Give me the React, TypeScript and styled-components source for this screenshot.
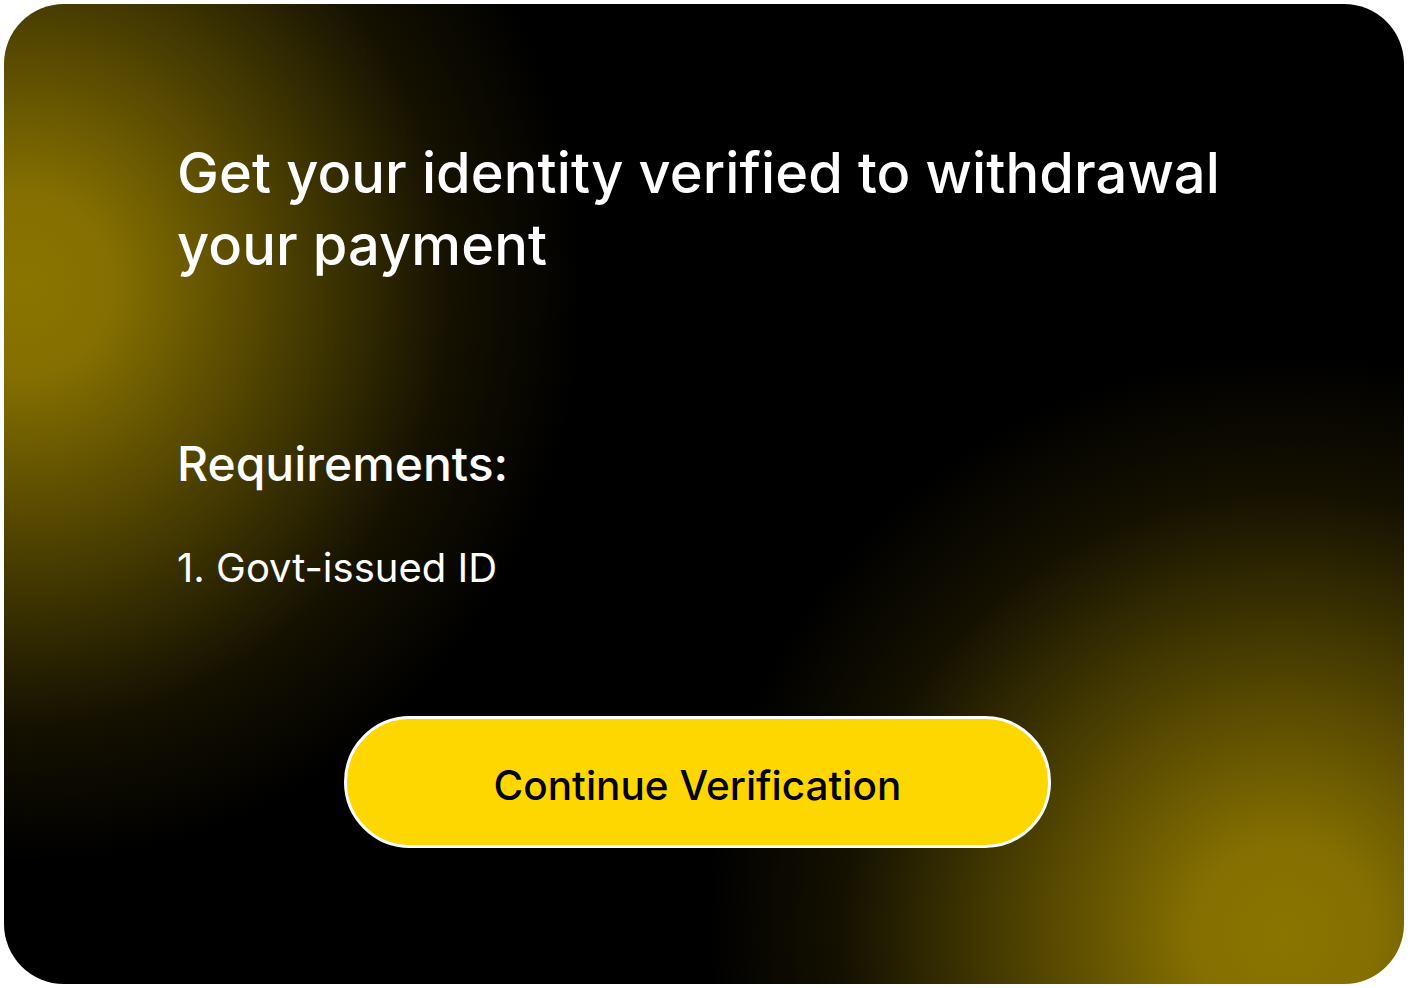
import React from "react";
import styled, { createGlobalStyle } from "styled-components";

const Global = createGlobalStyle`
  html, body { margin: 0; padding: 0; background: #ffffff; }
  body { font-family: Inter, "Noto Sans", sans-serif; }
`;

const Page = styled.div`
  padding: 4px;
`;

const Card = styled.section`
  width: 1400px;
  height: 980px;
  box-sizing: border-box;
  border-radius: 60px;
  overflow: hidden;
  padding: 133px 0 0 173px;
  display: flex;
  flex-direction: column;
  align-items: flex-start;
  background:
    radial-gradient(ellipse 560px 580px at 20px 280px, rgba(139, 117, 0, 1) 0%, rgba(139, 117, 0, 0.95) 16%, rgba(139, 117, 0, 0.55) 46%, rgba(139, 117, 0, 0.15) 76%, rgba(139, 117, 0, 0) 100%),
    radial-gradient(ellipse 580px 580px at 1280px 930px, rgba(139, 117, 0, 1) 0%, rgba(139, 117, 0, 0.95) 16%, rgba(139, 117, 0, 0.55) 46%, rgba(139, 117, 0, 0.15) 76%, rgba(139, 117, 0, 0) 100%),
    #000000;
`;

const Title = styled.h1`
  margin: 0;
  font-size: 56px;
  line-height: 72px;
  font-weight: 500;
  letter-spacing: 0.1px;
  color: #ffffff;
  max-width: 1100px;
`;

const Subtitle = styled.h2`
  margin: 154px 0 0 0;
  font-size: 48px;
  line-height: 58px;
  font-weight: 500;
  color: #ffffff;
`;

const Item = styled.p`
  margin: 50px 0 0 0;
  font-size: 40px;
  line-height: 50px;
  font-weight: 400;
  color: #ffffff;
`;

const Button = styled.button`
  margin: 123px 0 0 167px;
  width: 707px;
  height: 132px;
  box-sizing: border-box;
  padding: 6px 0 0 0;
  border: 3px solid #ffffff;
  border-radius: 66px;
  background: #ffd700;
  color: #000000;
  font-family: Inter, "Noto Sans", sans-serif;
  font-size: 40.5px;
  font-weight: 500;
  cursor: pointer;
`;

export default function App() {
  return (
    <Page>
      <Global />
      <Card>
        <Title>Get your identity verified to withdrawal your payment</Title>
        <Subtitle>Requirements:</Subtitle>
        <Item>1. Govt-issued ID</Item>
        <Button>Continue Verification</Button>
      </Card>
    </Page>
  );
}
